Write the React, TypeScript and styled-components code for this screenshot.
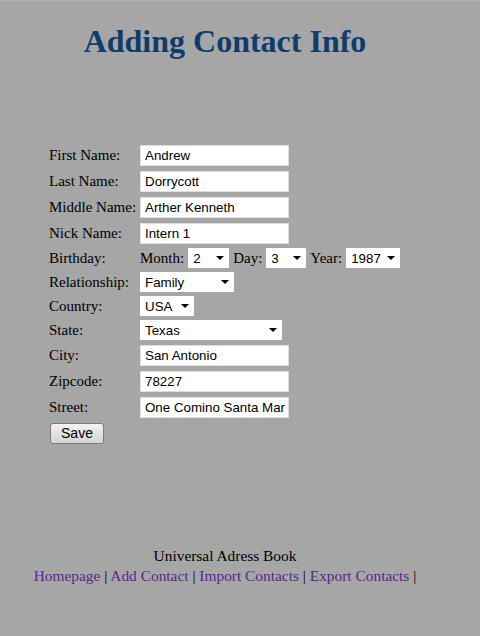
import React, { ReactElement } from "react";
import styled, { createGlobalStyle } from "styled-components";

const GlobalStyle = createGlobalStyle`
  html, body {
    margin: 0;
    padding: 0;
    background: #a6a6a6;
  }
  body {
    font-family: "Liberation Serif", "Times New Roman", serif;
    color: #000;
    border-top: 1px solid #b3b3b3;
  }
`;

const Page = styled.div`
  width: 450px;
  min-height: 635px;
`;

const Title = styled.h1`
  margin: 0;
  padding-top: 22px;
  text-align: center;
  font-size: 32px;
  line-height: 37px;
  font-weight: bold;
  color: #103c6c;
`;

const Form = styled.form`
  margin-top: 82px;
  padding-left: 49px;
  display: flex;
  flex-direction: column;
`;

const Row = styled.div<{ $h: number }>`
  display: flex;
  align-items: center;
  height: ${p => p.$h}px;
`;

const Label = styled.span`
  width: 91px;
  font-size: 15px;
  white-space: nowrap;
`;

const Inline = styled.span`
  font-size: 15px;
`;

const Field = styled.div`
  display: flex;
  align-items: center;
  gap: 4px;
`;

const TextInput = styled.input`
  box-sizing: border-box;
  width: 149px;
  height: 21px;
  margin: 0;
  padding: 0 3px 0 4px;
  border: 1px solid #dedede;
  background: #fff;
  font-family: "Liberation Sans", Arial, sans-serif;
  font-size: 13.33px;
  color: #000;
  outline: none;
`;

const SelectWrap = styled.span<{ $w: number }>`
  position: relative;
  display: inline-block;
  width: ${p => p.$w}px;
  height: 20px;

  &::after {
    content: "";
    position: absolute;
    right: 5px;
    top: 8px;
    border-left: 4px solid transparent;
    border-right: 4px solid transparent;
    border-top: 4px solid #000;
    pointer-events: none;
  }
`;

const Select = styled.select`
  appearance: none;
  -webkit-appearance: none;
  box-sizing: border-box;
  width: 100%;
  height: 20px;
  margin: 0;
  padding: 0 0 0 5px;
  border: none;
  border-radius: 0;
  background: #fff;
  font-family: "Liberation Sans", Arial, sans-serif;
  font-size: 13.33px;
  color: #000;
  outline: none;
`;

const SaveButton = styled.button`
  box-sizing: border-box;
  width: 54px;
  height: 21px;
  margin-left: 1px;
  padding: 0;
  border: 1px solid #7a7a7a;
  border-radius: 3px;
  background: linear-gradient(#f4f4f4, #e2e2e2 50%, #d6d6d6);
  font-family: "Liberation Sans", Arial, sans-serif;
  font-size: 14px;
  color: #000;
`;

const Footer = styled.div`
  margin-top: 100px;
  text-align: center;
  font-size: 15.4px;
  line-height: 20px;
`;

const NavLink = styled.a`
  color: #55288e;
  text-decoration: none;
`;

interface Option {
  w: number;
  value: string;
}

const Drop = ({ w, value }: Option): ReactElement => (
  <SelectWrap $w={w}>
    <Select defaultValue={value}>
      <option>{value}</option>
    </Select>
  </SelectWrap>
);

const textRows = [
  { label: "First Name:", value: "Andrew" },
  { label: "Last Name:", value: "Dorrycott" },
  { label: "Middle Name:", value: "Arther Kenneth" },
  { label: "Nick Name:", value: "Intern 1" }
];

const addressRows = [
  { label: "City:", value: "San Antonio" },
  { label: "Zipcode:", value: "78227" },
  { label: "Street:", value: "One Comino Santa Maria" }
];

const links = ["Homepage", "Add Contact", "Import Contacts", "Export Contacts"];

export default function App(): ReactElement {
  return (
    <Page>
      <GlobalStyle />
      <Title>Adding Contact Info</Title>
      <Form onSubmit={e => e.preventDefault()}>
        {textRows.map(r => (
          <Row $h={26} key={r.label}>
            <Label>{r.label}</Label>
            <TextInput defaultValue={r.value} />
          </Row>
        ))}
        <Row $h={24}>
          <Label>Birthday:</Label>
          <Field>
            <Inline>Month:</Inline>
            <Drop w={41} value="2" />
            <Inline>Day:</Inline>
            <Drop w={40} value="3" />
            <Inline>Year:</Inline>
            <Drop w={54} value="1987" />
          </Field>
        </Row>
        <Row $h={24}>
          <Label>Relationship:</Label>
          <Drop w={94} value="Family" />
        </Row>
        <Row $h={24}>
          <Label>Country:</Label>
          <Drop w={54} value="USA" />
        </Row>
        <Row $h={24}>
          <Label>State:</Label>
          <Drop w={142} value="Texas" />
        </Row>
        {addressRows.map(r => (
          <Row $h={26} key={r.label}>
            <Label>{r.label}</Label>
            <TextInput defaultValue={r.value} />
          </Row>
        ))}
        <Row $h={26}>
          <SaveButton type="submit">Save</SaveButton>
        </Row>
      </Form>
      <Footer>
        <div>Universal Adress Book</div>
        <div>
          {links.map(l => (
            <React.Fragment key={l}>
              <NavLink href="#">{l}</NavLink> |{" "}
            </React.Fragment>
          ))}
        </div>
      </Footer>
    </Page>
  );
}
